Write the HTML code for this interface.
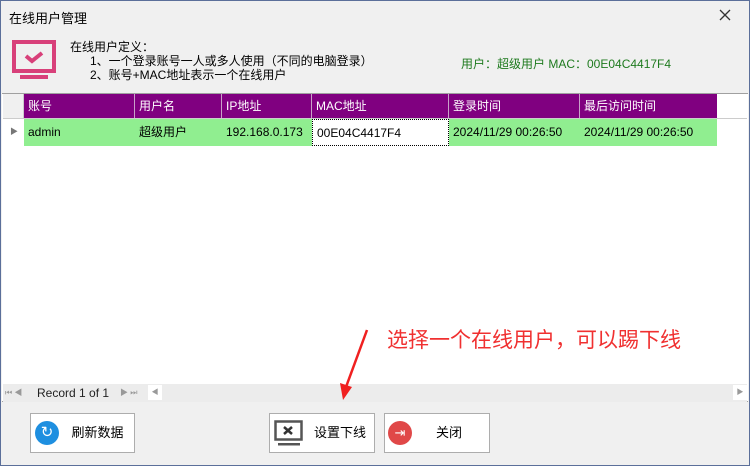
<!DOCTYPE html>
<html><head><meta charset="utf-8"><style>
*{margin:0;padding:0;box-sizing:border-box}
body{width:750px;height:466px;background:#f0f0f0;font-family:"Liberation Sans","Noto Sans CJK SC",sans-serif;font-size:12px;color:#000;position:relative;overflow:hidden}
.a{position:absolute}
.frame{left:0;top:0;width:750px;height:466px;border:1px solid #5b6f9a}
.grid{left:2px;top:93px;width:746px;height:309px;background:#fff;border-top:1px solid #a0a0a0;border-bottom:1px solid #a0a0a0}
.hd{top:94px;height:24px;background:#800080;color:#fff;line-height:24px;padding-left:4px;border-right:1px solid #c9a0c9}
.cell{top:119px;height:27px;background:#90ee90;line-height:27px;padding-left:4px}
.btn{top:413px;height:40px;background:#fff;border:1px solid #adadad;text-align:center;line-height:38px;font-size:13px}
</style></head><body>
<div class="a frame"></div>
<div class="a" style="left:9px;top:8px;font-size:13px">在线用户管理</div>
<svg class="a" style="left:719px;top:9px" width="12" height="12"><path d="M1 1L11 11M11 1L1 11" stroke="#333" stroke-width="1.3"/></svg>
<svg class="a" style="left:12px;top:40px" width="44" height="40" viewBox="0 0 44 40"><rect x="2" y="2" width="40" height="29" fill="none" stroke="#d8407a" stroke-width="4"/><path d="M14 16l6 5 10-8" fill="none" stroke="#d8407a" stroke-width="4"/><rect x="8" y="35" width="28" height="4" fill="#d8407a"/></svg>
<div class="a" style="left:70px;top:40px;line-height:14px">在线用户定义：<br>&nbsp;&nbsp;&nbsp;&nbsp;&nbsp;&nbsp;1、一个登录账号一人或多人使用（不同的电脑登录）<br>&nbsp;&nbsp;&nbsp;&nbsp;&nbsp;&nbsp;2、账号+MAC地址表示一个在线用户</div>
<div class="a" style="left:461px;top:55px;color:#1e7a1e">用户：超级用户 MAC：00E04C4417F4</div>
<div class="a grid"></div>
<div class="a" style="left:3px;top:94px;width:21px;height:24px;background:#f0f0f0;border-right:1px solid #ccc"></div>
<div class="a hd" style="left:24px;width:111px">账号</div>
<div class="a hd" style="left:135px;width:87px">用户名</div>
<div class="a hd" style="left:222px;width:90px">IP地址</div>
<div class="a hd" style="left:312px;width:137px">MAC地址</div>
<div class="a hd" style="left:449px;width:131px">登录时间</div>
<div class="a hd" style="left:580px;width:137px;border-right:none">最后访问时间</div>
<div class="a" style="left:3px;top:118px;width:744px;height:1px;background:#ccc"></div>
<div class="a" style="left:10px;top:126px;color:#777;font-size:8px">▶</div>
<div class="a cell" style="left:24px;width:111px">admin</div>
<div class="a cell" style="left:135px;width:87px">超级用户</div>
<div class="a cell" style="left:222px;width:90px">192.168.0.173</div>
<div class="a cell" style="left:312px;width:137px;background:#fff;border:1px dotted #000">00E04C4417F4</div>
<div class="a cell" style="left:449px;width:131px">2024/11/29 00:26:50</div>
<div class="a cell" style="left:580px;width:137px">2024/11/29 00:26:50</div>
<div class="a" style="left:3px;top:384px;width:744px;height:18px;background:#ececec"></div>
<div class="a" style="left:5px;top:387px;font-size:8px;color:#999">⏮ ◀</div>
<div class="a" style="left:37px;top:386px;font-size:12px;color:#222">Record 1 of 1</div>
<div class="a" style="left:120px;top:387px;font-size:8px;color:#999">▶ ⏭</div>
<div class="a" style="left:148px;top:385px;width:14px;height:15px;background:#fff;font-size:7px;color:#999;text-align:center;line-height:15px">◀</div>
<div class="a" style="left:733px;top:385px;width:14px;height:15px;background:#fff;font-size:7px;color:#999;text-align:center;line-height:15px">▶</div>
<div class="a" style="left:387px;top:324px;font-size:21px;color:#f03030">选择一个在线用户，可以踢下线</div>
<svg class="a" style="left:330px;top:325px" width="50" height="80"><path d="M37 5L16 62" stroke="#f02020" stroke-width="2.5" fill="none"/><path d="M10 58L13 75L22 62Z" fill="#f02020"/></svg>
<div class="a btn" style="left:30px;width:105px"><span class="a" style="left:4px;top:7px;width:24px;height:24px;border-radius:50%;background:#1e8fe0;color:#fff;line-height:24px;font-size:15px">↻</span><span style="margin-left:30px">刷新数据</span></div>
<div class="a btn" style="left:269px;width:106px"><svg class="a" style="left:4px;top:6px" width="30" height="26"><rect x="1.5" y="1.5" width="26" height="18" fill="none" stroke="#555" stroke-width="2.5"/><path d="M10 7l8 7M18 7l-8 7" stroke="#333" stroke-width="2.5"/><rect x="4" y="23" width="22" height="2.5" fill="#555"/></svg><span style="margin-left:36px">设置下线</span></div>
<div class="a btn" style="left:384px;width:106px"><span class="a" style="left:3px;top:7px;width:24px;height:24px;border-radius:50%;background:#e04848;color:#fff;line-height:24px;font-size:13px">⇥</span><span style="margin-left:24px">关闭</span></div>
</body></html>
